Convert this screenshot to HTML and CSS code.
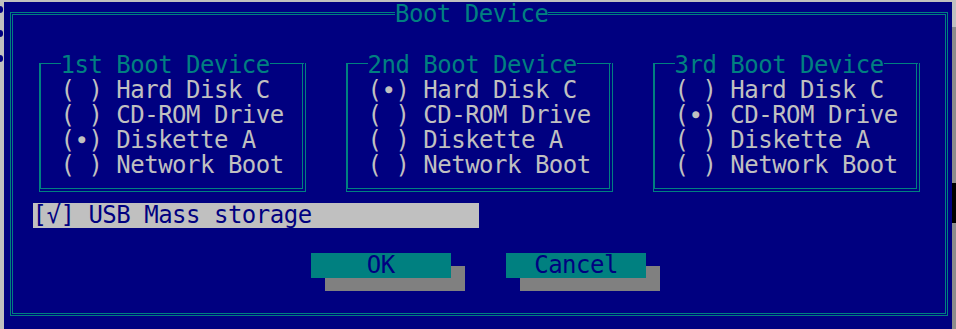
FILE: index.html
```html
<!DOCTYPE html>
<html lang="en">
<head>
    <meta charset="UTF-8">
    <title>Boot Device</title>
    <link rel="stylesheet" href="styles.css">
</head>
<body>
    <div class="screen">
        <div class="edge">
            <span class="dot dot-1"></span>
            <span class="dot dot-2"></span>
            <span class="dot dot-3"></span>
        </div>

        <div class="dialog">
            <div class="frame">
                <div class="frame-title">Boot Device</div>

                <div class="groups">
                    <div class="group">
                        <div class="group-title">1st Boot Device</div>
                        <div class="option">( ) Hard Disk C</div>
                        <div class="option">( ) CD-ROM Drive</div>
                        <div class="option">(∙) Diskette A</div>
                        <div class="option">( ) Network Boot</div>
                    </div>
                    <div class="group">
                        <div class="group-title">2nd Boot Device</div>
                        <div class="option">(∙) Hard Disk C</div>
                        <div class="option">( ) CD-ROM Drive</div>
                        <div class="option">( ) Diskette A</div>
                        <div class="option">( ) Network Boot</div>
                    </div>
                    <div class="group">
                        <div class="group-title">3rd Boot Device</div>
                        <div class="option">( ) Hard Disk C</div>
                        <div class="option">(∙) CD-ROM Drive</div>
                        <div class="option">( ) Diskette A</div>
                        <div class="option">( ) Network Boot</div>
                    </div>
                </div>

                <div class="check">[√] USB Mass storage</div>

                <div class="buttons">
                    <div class="btn">OK</div>
                    <div class="btn">Cancel</div>
                </div>
            </div>
        </div>

        <div class="scrollbar"></div>
    </div>
</body>
</html>
```

FILE: styles.css
```css
body {
    margin: 0;
    background-color: #c0c0c0;
    font-family: "DejaVu Sans Mono", "Liberation Mono", monospace;
    font-size: 24px;
    line-height: 25px;
    letter-spacing: -0.5px;
    overflow: hidden;
}
.screen {
    display: flex;
    height: 329px;
}

/* strip of the screen behind the dialog */
.edge {
    width: 4px;
    display: flex;
    flex-direction: column;
}
.dot {
    display: block;
    width: 3px;
    height: 7px;
    background: #000080;
    border-radius: 0 4px 4px 0;
}
.dot-1 { margin-top: 6px; }
.dot-2 { margin-top: 17px; }
.dot-3 { margin-top: 18px; }
.scrollbar {
    width: 4px;
    background: linear-gradient(#c0c0c0 0 27px, #8c8c8c 27px 183px, #000 183px 223px, #8c8c8c 223px);
}

/* dialog */
.dialog {
    width: 948px;
    margin-top: 2px;
    background-color: #000080;
}
.frame {
    box-sizing: border-box;
    width: 938px;
    height: 304px;
    margin: 10px 0 0 6px;
    border: 3px double #008080;
}
.frame-title {
    width: fit-content;
    margin: -13px 0 0 382px;
    background-color: #000080;
    color: #008080;
}

.groups {
    display: flex;
    gap: 40px;
    margin: 36px 0 0 26px;
}
.group {
    box-sizing: border-box;
    width: 267px;
    padding: 0 0 10px 19.5px;
    border-top: 1px solid #008080;
    border-left: 2px solid #008080;
    border-right: 4px double #008080;
    border-bottom: 4px double #008080;
}
.group-title {
    width: fit-content;
    margin-top: -11px;
    background-color: #000080;
    color: #008080;
}
.option {
    color: #c0c0c0;
    white-space: pre;
}

.check {
    width: 446px;
    height: 25px;
    margin: 11px 0 0 19.6px;
    background-color: #c0c0c0;
    color: #000080;
    white-space: pre;
}

.buttons {
    display: flex;
    gap: 55.8px;
    margin: 25px 0 0 298px;
}
.btn {
    width: 139.5px;
    height: 25px;
    text-align: center;
    background-color: #008080;
    color: #000080;
    box-shadow: 14px 13px 0 #808080;
}
```
